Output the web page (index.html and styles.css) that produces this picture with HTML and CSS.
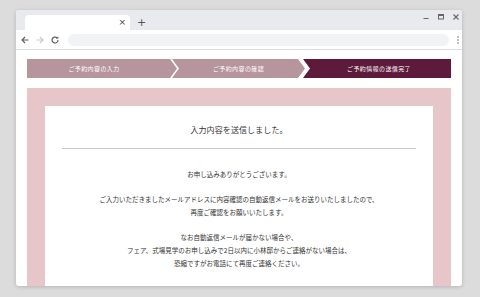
FILE: index.html
```html
<!DOCTYPE html>
<html lang="ja">
<head>
<meta charset="utf-8">
<title>送信完了</title>
<link rel="stylesheet" href="styles.css">
</head>
<body>
<div class="window">
  <div class="tabstrip">
    <div class="tab"><span class="tab-close">×</span></div>
    <span class="newtab">+</span>
    <div class="winctl">
      <svg width="8" height="8" viewBox="0 0 8 8"><path d="M1.5 5.5h5" stroke="#666" stroke-width="1"/></svg>
      <svg width="8" height="8" viewBox="0 0 8 8"><rect x="1.5" y="1.5" width="5" height="4.5" fill="none" stroke="#666" stroke-width="1"/><path d="M1.5 2.5h5" stroke="#666" stroke-width="1"/></svg>
      <svg width="8" height="8" viewBox="0 0 8 8"><path d="M1.5 1.5l5 5M6.5 1.5l-5 5" stroke="#666" stroke-width="1.1"/></svg>
    </div>
  </div>
  <div class="toolbar">
    <svg class="nav" width="10" height="10" viewBox="0 0 10 10"><path d="M8.5 5H2M5 2L2 5l3 3" fill="none" stroke="#5f6368" stroke-width="1.2"/></svg>
    <svg class="nav" width="10" height="10" viewBox="0 0 10 10"><path d="M1.5 5H8M5 2l3 3-3 3" fill="none" stroke="#c8cacd" stroke-width="1.2"/></svg>
    <svg class="nav" width="10" height="10" viewBox="0 0 10 10"><path d="M8 5a3 3 0 1 1-1-2.2" fill="none" stroke="#5f6368" stroke-width="1.2"/><path d="M8.3 1.3v2.4H5.9z" fill="#5f6368"/></svg>
    <div class="omnibox"></div>
    <svg class="menu" width="4" height="10" viewBox="0 0 4 10"><circle cx="2" cy="2" r="0.8" fill="#777"/><circle cx="2" cy="5" r="0.8" fill="#777"/><circle cx="2" cy="8" r="0.8" fill="#777"/></svg>
  </div>
  <div class="page">
    <ol class="steps">
      <li class="step step-1">ご予約内容の入力</li>
      <li class="step step-2">ご予約内容の確認</li>
      <li class="step step-3 current">ご予約情報の送信完了</li>
    </ol>
    <section class="panel">
      <div class="card">
        <h1 class="title">入力内容を送信しました。</h1>
        <hr class="rule">
        <p class="msg">お申し込みありがとうございます。</p>
        <p class="msg">ご入力いただきましたメールアドレスに内容確認の自動返信メールをお送りいたしましたので、<br>再度ご確認をお願いいたします。</p>
        <p class="msg">なお自動返信メールが届かない場合や、<br>フェア、式場見学のお申し込みで2日以内に小林邸からご連絡がない場合は、<br>恐縮ですがお電話にて再度ご連絡ください。</p>
      </div>
    </section>
  </div>
</div>
</body>
</html>
```

FILE: styles.css
```css
html, body {
  margin: 0;
  padding: 0;
}
body {
  width: 480px;
  height: 297px;
  overflow: hidden;
  background: #dcdcdc;
  font-family: "Noto Sans CJK JP", "Noto Sans", sans-serif;
  color: #333;
}
.window {
  margin: 10px 0 0 16px;
  width: 446px;
  height: 276px;
  background: #fff;
  border-radius: 3px;
  overflow: hidden;
  display: flex;
  flex-direction: column;
  box-shadow: 0 1px 4px rgba(0,0,0,0.18);
}
.tabstrip {
  height: 20px;
  flex: none;
  background: #e8eaed;
  display: flex;
  align-items: flex-end;
  padding-left: 9px;
}
.tab {
  width: 105px;
  height: 15px;
  background: #fff;
  border-radius: 4px 4px 0 0;
  display: flex;
  align-items: center;
  justify-content: flex-end;
  box-sizing: border-box;
  padding-right: 4px;
}
.tab-close {
  font-family: "DejaVu Sans", sans-serif;
  font-size: 9px;
  line-height: 9px;
  color: #444;
}
.newtab {
  font-family: "DejaVu Sans", sans-serif;
  font-size: 11px;
  line-height: 15px;
  height: 15px;
  color: #555;
  margin-left: 7px;
}
.winctl {
  margin-left: auto;
  align-self: flex-start;
  display: flex;
  gap: 7px;
  padding: 3px 2px 0 0;
}
.toolbar {
  height: 19px;
  flex: none;
  border-bottom: 1px solid #dadce0;
  display: flex;
  align-items: center;
  padding: 0 0 0 4px;
  gap: 5px;
}
.nav {
  flex: none;
}
.omnibox {
  margin-left: 3px;
  width: 381px;
  height: 12px;
  background: #f1f3f4;
  border-radius: 6px;
}
.menu {
  margin-left: 2px;
}
.page {
  flex: 1;
  padding: 9px 11px 0;
  display: flex;
  flex-direction: column;
  min-height: 0;
}
.steps {
  list-style: none;
  margin: 0;
  padding: 0;
  display: flex;
  height: 19px;
  flex: none;
}
.step {
  height: 19px;
  display: flex;
  align-items: center;
  justify-content: center;
  color: #fff;
  font-size: 6px;
  letter-spacing: 0.4px;
  background: #b7959d;
  flex: none;
}
.step-1 {
  width: 150px;
  padding-right: 16px;
  box-sizing: border-box;
  clip-path: polygon(0 0, calc(100% - 7px) 0, 100% 50%, calc(100% - 7px) 100%, 0 100%);
}
.step-2 {
  width: 133px;
  margin-left: -5px;
  clip-path: polygon(0 0, calc(100% - 7px) 0, 100% 50%, calc(100% - 7px) 100%, 0 100%, 7px 50%);
}
.step-3 {
  width: 148px;
  margin-left: -2px;
  padding-left: 4px;
  box-sizing: border-box;
  clip-path: polygon(0 0, 100% 0, 100% 100%, 0 100%, 7px 50%);
}
.step.current {
  background: #5e1a3b;
}
.panel {
  margin-top: 10px;
  flex: 1;
  background: #e6c6c8;
  padding: 18px 18px 0;
  display: flex;
  min-height: 0;
}
.card {
  flex: 1;
  background: #fff;
  padding: 18px 17px 0;
  text-align: center;
}
.title {
  margin: 0;
  font-size: 8px;
  line-height: 12px;
  font-weight: normal;
  color: #333;
  letter-spacing: 0.1px;
}
.rule {
  margin: 12px 0 0;
  border: 0;
  border-top: 1px solid #c9c9c9;
  height: 0;
}
.msg {
  margin: 0;
  font-size: 6.5px;
  line-height: 12.8px;
  color: #333;
}
.rule + .msg {
  margin-top: 19px;
}
.msg + .msg {
  margin-top: 12.4px;
}
```
